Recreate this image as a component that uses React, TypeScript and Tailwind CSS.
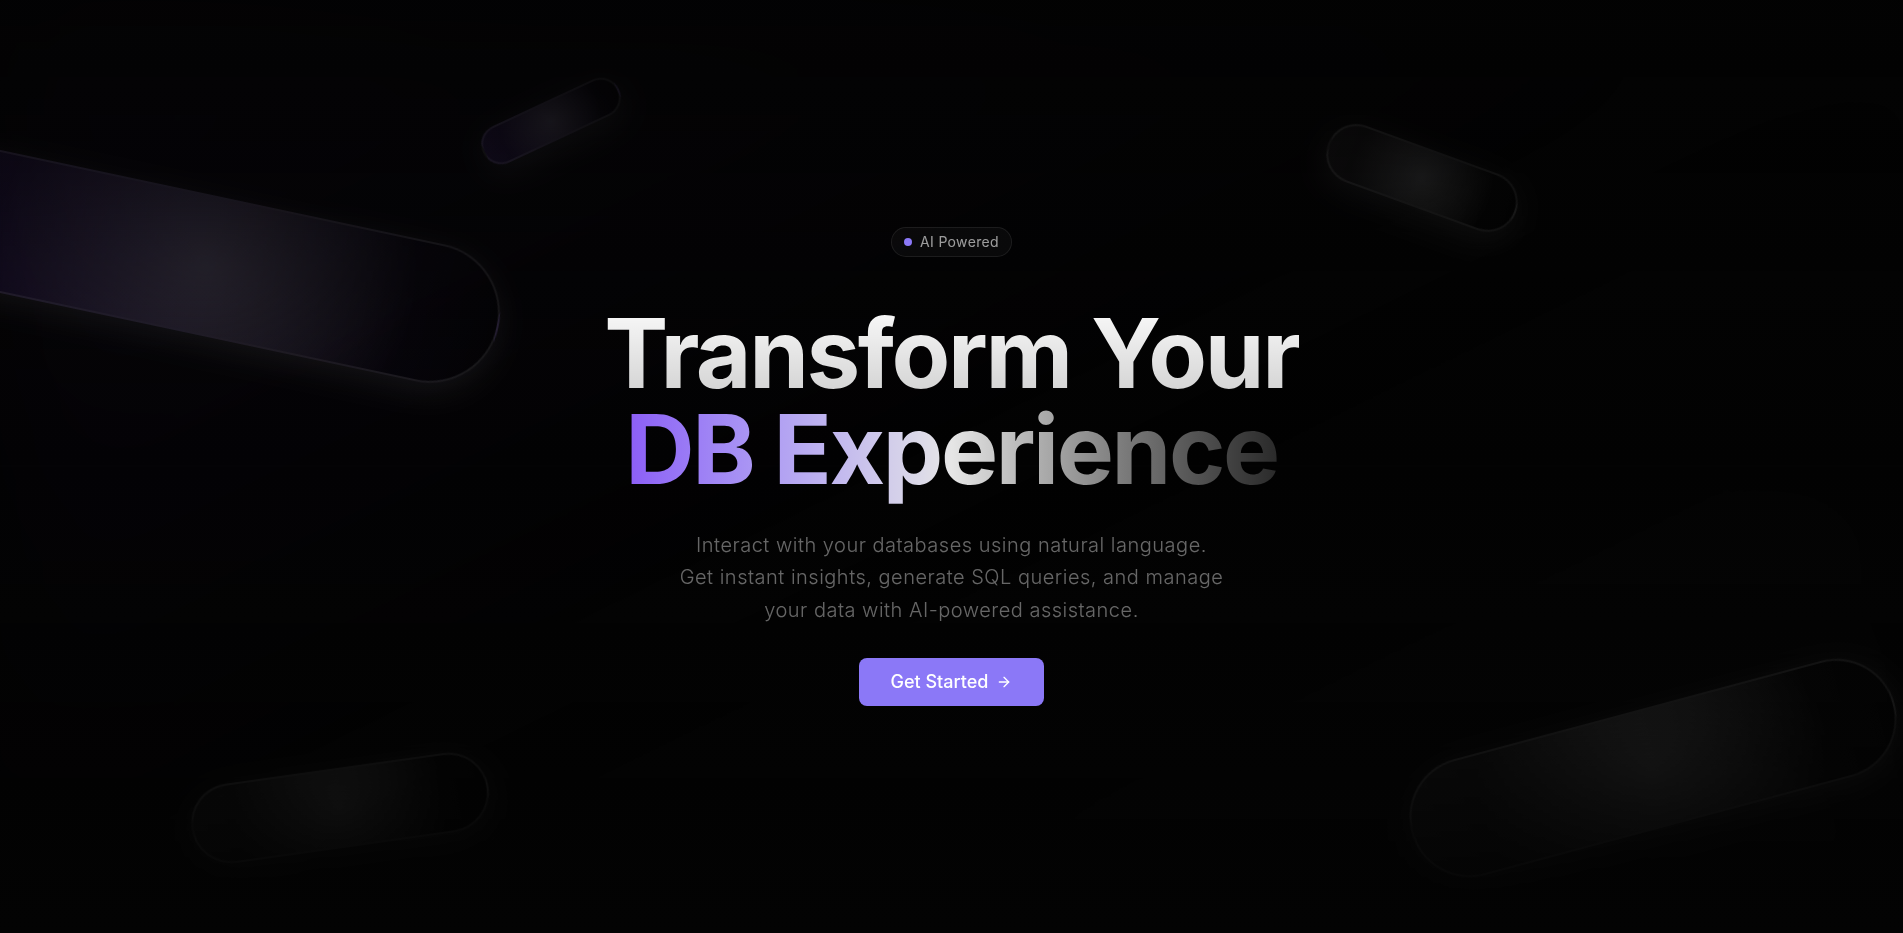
import React from 'react'
import { ArrowRight } from 'lucide-react'

interface ShapeProps {
  className: string
  sizeClass: string
  gradient: string
}

// floating pill in the background
const ElegantShape = ({ className, sizeClass, gradient }: ShapeProps) => {
  return (
    <div className={`absolute ${className}`}>
      <div className={`relative translate-y-2 ${sizeClass}`}>
        <div
          className={`absolute inset-0 rounded-full bg-gradient-to-r to-transparent ${gradient} backdrop-blur-[2px] border-2 border-white/[0.1] shadow-[0_8px_32px_0_rgba(255,255,255,0.08)] after:absolute after:inset-0 after:rounded-full after:bg-[radial-gradient(circle_at_50%_50%,rgba(255,255,255,0.14),transparent_70%)]`}
        />
      </div>
    </div>
  )
}

const App = () => {
  return (
    <div
      className="relative min-h-screen w-full flex items-center justify-center overflow-hidden bg-[#030303]"
      style={{ fontFamily: 'Inter, "Noto Sans", sans-serif' }}
    >
      <div className="absolute inset-0 bg-gradient-to-br from-violet-500/[0.04] via-transparent to-neutral-500/[0.03] blur-3xl" />

      <div className="absolute inset-0 overflow-hidden">
        <ElegantShape
          sizeClass="w-[600px] h-[140px] rotate-[12deg]"
          gradient="from-violet-500/[0.15]"
          className="left-[-5%] top-[20%]"
        />
        <ElegantShape
          sizeClass="w-[500px] h-[120px] -rotate-[15deg]"
          gradient="from-white/[0.06]"
          className="right-0 top-[75%]"
        />
        <ElegantShape
          sizeClass="w-[300px] h-[80px] -rotate-[8deg]"
          gradient="from-white/[0.06]"
          className="left-[10%] bottom-[10%]"
        />
        <ElegantShape
          sizeClass="w-[200px] h-[60px] rotate-[20deg]"
          gradient="from-white/[0.06]"
          className="right-[20%] top-[15%]"
        />
        <ElegantShape
          sizeClass="w-[150px] h-[40px] -rotate-[25deg]"
          gradient="from-violet-500/[0.15]"
          className="left-[25%] top-[10%]"
        />
      </div>

      <div className="relative z-10 container mx-auto px-6">
        <div className="max-w-3xl mx-auto flex flex-col items-center text-center">
          <div className="inline-flex items-center gap-2 px-3 py-1 rounded-full bg-white/[0.03] border border-white/[0.08] mb-12">
            <span className="h-2 w-2 rounded-full bg-[#8b78f7]" />
            <span className="text-sm text-white/60 tracking-wide">AI Powered</span>
          </div>

          <h1 className="text-8xl font-bold mb-8 tracking-tight">
            <span className="bg-clip-text text-transparent bg-gradient-to-b from-white to-white/80">
              Transform Your
            </span>
            <br />
            <span className="bg-clip-text text-transparent bg-gradient-to-r from-[#8b5cf6] via-white/90 to-[#2a2a2a]">
              DB Experience
            </span>
          </h1>

          <p className="text-xl text-white/40 mb-8 leading-relaxed font-light tracking-wide max-w-xl mx-auto px-4">
            Interact with your databases using natural language. Get instant insights, generate SQL
            queries, and manage your data with AI-powered assistance.
          </p>

          <button className="inline-flex items-center gap-2 h-12 px-8 rounded-lg bg-[#8b78f7] text-white text-lg font-medium">
            Get Started
            <ArrowRight size={16} />
          </button>
        </div>
      </div>

      <div className="absolute inset-0 bg-gradient-to-t from-[#030303] via-transparent to-[#030303]/80 pointer-events-none" />
    </div>
  )
}

export default App
